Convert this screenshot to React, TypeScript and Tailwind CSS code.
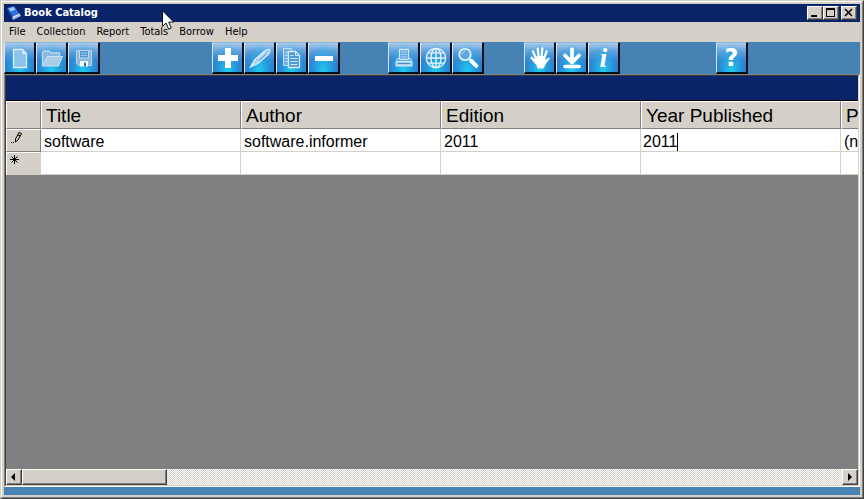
import type { ReactNode } from "react";
import clsx from "clsx";

type BookType = {
    id: string;
    title: string;
    author: string;
    edition: string;
    year: string;
    rest: string;
};

type ToolType = {
    label: string;
    icon: ReactNode;
};

const books: BookType[] = [
    {
        id: "1",
        title: "software",
        author: "software.informer",
        edition: "2011",
        year: "2011",
        rest: "(n",
    },
];

const menus = ["File", "Collection", "Report", "Totals", "Borrow", "Help"];

const columns = ["Title", "Author", "Edition", "Year Published", "P"];

const raised =
    "border border-t-white border-l-white border-r-[#404040] border-b-[#404040] bg-[#d4d0c8] shadow-[inset_-1px_-1px_0_#808080]";

const Icon = ({ children }: { children: ReactNode }) => (
    <svg width="24" height="24" viewBox="0 0 24 24" fill="none" stroke="none" aria-hidden="true">
        {children}
    </svg>
);

const fileTools: ToolType[] = [
    {
        label: "New",
        icon: (
            <Icon>
                <path d="M5.500 3.500h9l4 4v14h-13z" fill="#8cc4ee" stroke="#dcebf6" strokeWidth="1.300" />
                <path d="M14.500 3.500v4h4" fill="#c5e2f7" stroke="#dcebf6" />
            </Icon>
        ),
    },
    {
        label: "Open",
        icon: (
            <Icon>
                <path d="M2.500 20V6.500l1.500-1.500h5l2 2h8.500v3" fill="#86b9e2" stroke="#bcd7ec" strokeWidth="1.300" />
                <path d="m2.500 20 4.500-9.500h15.500l-4 9.500z" fill="#a9cdea" stroke="#cbe0f0" />
            </Icon>
        ),
    },
    {
        label: "Save",
        icon: (
            <Icon>
                <path d="M4.500 4.500h15v15h-13l-2-2z" fill="#8db9dd" stroke="#bcd3e6" />
                <path d="M7.500 4.500h9v7.500h-9z" fill="#4f9bd9" stroke="#c3d9eb" />
                <path d="M9 7h6M9 9.500h6" stroke="#a5c8e5" />
                <path d="M8 15h8v5.500H8z" fill="#f7fbfe" />
                <path d="M12 16.500h2v4h-2z" fill="#1c78b8" />
            </Icon>
        ),
    },
];

const recordTools: ToolType[] = [
    {
        label: "Add",
        icon: (
            <Icon>
                <path d="M9 2h6v7h7v6h-7v7H9v-7H2V9h7z" fill="#fff" />
            </Icon>
        ),
    },
    {
        label: "Edit",
        icon: (
            <Icon>
                <path d="M2.500 21 6.500 14 16 5.500c2.400-2 5-2.500 5.700-1.700.7.900-.2 3.200-2.200 5.200L10 17.500z" fill="#9cc8ea" stroke="#dcecf8" strokeWidth="1.200" />
                <path d="m2.500 21 5-4.500M7 14l3 3M9.500 12.500 17 6.500" stroke="#e8f3fb" />
                <path d="m12 14 6-5.500" stroke="#5a9dd2" />
            </Icon>
        ),
    },
    {
        label: "Copy",
        icon: (
            <Icon>
                <path d="M3.500 2.500h8v3h-3v14h-5z" fill="#6db0e4" stroke="#c8e1f4" />
                <path d="M5 6.500h3M5 9.500h3M5 12.500h3M5 15.500h3" stroke="#b9d9f1" />
                <path d="M8.500 5.500h7l4 4v12h-11z" fill="#4b9bdb" stroke="#d7e9f7" strokeWidth="1.300" />
                <path d="M15.500 5.500v4h4M10.500 9.500h3M10.500 12.500h7M10.500 15.500h7M10.500 18.500h7" stroke="#d7e9f7" />
            </Icon>
        ),
    },
    {
        label: "Remove",
        icon: (
            <Icon>
                <path d="M3 10h18v5H3z" fill="#fff" />
            </Icon>
        ),
    },
];

const viewTools: ToolType[] = [
    {
        label: "Print",
        icon: (
            <Icon>
                <path d="M7.500 3.500h9v10h-9z" fill="#5fa6de" stroke="#d2e6f5" strokeWidth="1.300" />
                <path d="M9 6h6M9 8.500h6M9 11h6" stroke="#b9d8ef" />
                <path d="M7 12.500H5.500l-1 3h15l-1-3H17" stroke="#cfe4f4" />
                <path d="M4 15.500h16v4.500H4z" fill="#a9d0ec" stroke="#d9eaf7" />
                <path d="M6 17.500h12" stroke="#3f8fce" />
            </Icon>
        ),
    },
    {
        label: "Web",
        icon: (
            <Icon>
                <g stroke="#e9f3fb" strokeWidth="1.300">
                    <circle cx="12" cy="12" r="9.700" />
                    <ellipse cx="12" cy="12" rx="5" ry="9.700" />
                    <path d="M12 2.300v19.400M2.300 12h19.400M4 6.800h16M4 17.200h16" />
                </g>
            </Icon>
        ),
    },
    {
        label: "Search",
        icon: (
            <Icon>
                <circle cx="9" cy="8.500" r="5.700" fill="#5da8e2" stroke="#e3f0fa" strokeWidth="1.800" />
                <path d="M6 8c.3-1.600 1.400-2.500 3-2.700" stroke="#c8e1f4" />
                <path d="m13.500 13 1.800 1.800" stroke="#e3f0fa" strokeWidth="2" />
                <path d="m15.300 14.800 5 5" stroke="#fff" strokeWidth="4" strokeLinecap="round" />
            </Icon>
        ),
    },
];

const actionTools: ToolType[] = [
    {
        label: "Borrow",
        icon: (
            <Icon>
                <path d="M8 12.500 5 5.500M10.700 11 9.700 2.700M13.700 11l.6-8.500M16.300 12l2.300-6.700M8 17 3.500 11.800" stroke="#fff" strokeWidth="2.300" strokeLinecap="round" />
                <path d="M6.800 11.500 9.500 10h7.800l.2 4 3-2.200c1-.5 1.700.2 1.100 1L17.500 18.500 15.500 22.500H9.500L8.300 19 5.500 15.500z" fill="#fff" />
            </Icon>
        ),
    },
    {
        label: "Download",
        icon: (
            <Icon>
                <path d="M12 3.500V16M5 9.500l7 7 7-7" stroke="#fff" strokeWidth="3.800" strokeLinecap="round" strokeLinejoin="round" />
                <path d="M5 20.500h14" stroke="#fff" strokeWidth="3.500" strokeLinecap="round" />
            </Icon>
        ),
    },
    {
        label: "Info",
        icon: (
            <span className="font-['Liberation_Serif',serif] text-[28px] leading-6 font-bold text-white italic">i</span>
        ),
    },
];

const helpTools: ToolType[] = [
    {
        label: "Help",
        icon: (
            <span className="font-['DejaVu_Sans',sans-serif] text-2xl leading-6 font-bold text-white">?</span>
        ),
    },
];

const ToolGroup = ({ tools }: { tools: ToolType[] }) => (
    <div className="flex shrink-0">
        {tools.map((tool) => (
            <button
                key={tool.label}
                aria-label={tool.label}
                className="flex size-8 items-center justify-center border-t border-r-2 border-b-2 border-l border-t-[#8fb6d8] border-r-[#06101c] border-b-[#06101c] border-l-[#d5e6f4] bg-[radial-gradient(ellipse_at_50%_105%,#1fd0f0_0%,#22b4ea90_38%,transparent_70%),linear-gradient(#a8cbea_0%,#5c9fdb_30%,#3484d2_60%,#267fcd_100%)]"
            >
                {tool.icon}
            </button>
        ))}
    </div>
);

const BookIcon = () => (
    <svg width="14" height="16" viewBox="0 0 14 16" aria-hidden="true">
        <path d="M0 3 7 1l5.500 7.500L5.500 11.500z" fill="#2f6fe0" />
        <path d="M1.500 3.500 6.500 2l2 2.700L3.500 6.500z" fill="#a3c6fb" />
        <path d="M0 3 5.500 11.500V15L1 7z" fill="#123c9c" />
        <path d="m5.500 11.500 7-3 1.300 2.500-8 4z" fill="#dfe7f2" />
        <path d="m5.800 13.300 7.500-3.500" stroke="#8e9db8" strokeWidth=".7" />
        <path d="m5.500 15.200 8.300-4" stroke="#2458c4" />
    </svg>
);

const TitleBar = () => (
    <header className="flex h-[18px] shrink-0 items-center bg-[#0a246a] pr-[3px] pl-[3px]">
        <BookIcon />
        <h1 className="ml-[3px] flex-1 font-['DejaVu_Sans_Condensed','DejaVu_Sans',sans-serif] text-[11px] leading-4 font-bold text-white">
            Book Catalog
        </h1>
        <button aria-label="Minimize" className={clsx(raised, "h-[14px] w-4")}>
            <svg width="14" height="12" viewBox="0 0 14 12"><path d="M3 8h6v2H3z" /></svg>
        </button>
        <button aria-label="Maximize" className={clsx(raised, "h-[14px] w-4")}>
            <svg width="14" height="12" viewBox="0 0 14 12"><path fillRule="evenodd" d="M2 1h9v9H2zM3 3v6h7V3z" /></svg>
        </button>
        <button aria-label="Close" className={clsx(raised, "ml-0.5 h-[14px] w-4")}>
            <svg width="14" height="12" viewBox="0 0 14 12"><path d="m3 2 7 7m0-7L3 9" stroke="#000" strokeWidth="1.500" /></svg>
        </button>
    </header>
);

const MenuBar = () => (
    <nav className="flex h-5 shrink-0 items-center gap-[11px] pl-[5px] font-['DejaVu_Sans_Condensed','DejaVu_Sans',sans-serif] text-[11px] leading-4 text-black">
        {menus.map((menu) => (
            <button key={menu}>{menu}</button>
        ))}
    </nav>
);

const ToolBar = () => (
    <div className="flex h-8 shrink-0 overflow-hidden bg-[#4682b4]">
        <ToolGroup tools={fileTools} />
        <div className="w-28 shrink-0" />
        <ToolGroup tools={recordTools} />
        <div className="w-12 shrink-0" />
        <ToolGroup tools={viewTools} />
        <div className="w-10 shrink-0" />
        <ToolGroup tools={actionTools} />
        <div className="w-24 shrink-0" />
        <ToolGroup tools={helpTools} />
    </div>
);

const cell = "h-[23px] border-r border-b border-[#d4d0c8] bg-white px-[3px] pt-1 pb-0 leading-[18px]";
const rowHead = "border-t border-l border-white bg-[#d4d0c8] p-0 pl-[3px] align-top";

const BookTable = () => (
    <table className="w-[1035px] table-fixed border-separate border-spacing-0 text-base text-black">
        <colgroup>
            <col className="w-[35px]" />
            {columns.map((column) => (
                <col key={column} className="w-[200px]" />
            ))}
        </colgroup>
        <thead>
            <tr className="text-left text-[19px]">
                <th className="h-7 border border-t-white border-r-[#808080] border-b-[#808080] border-l-white bg-[#d4d0c8] p-0"></th>
                {columns.map((column) => (
                    <th
                        key={column}
                        className="h-7 border border-t-white border-r-[#808080] border-b-[#808080] border-l-white bg-[#d4d0c8] p-0 pt-0.5 pl-1 leading-6 font-normal"
                    >
                        {column}
                    </th>
                ))}
            </tr>
        </thead>
        <tbody>
            {books.map((book) => (
                <tr key={book.id}>
                    <th className={clsx(rowHead, "border-r border-b border-r-[#808080] border-b-[#808080]")}>
                        <svg width="14" height="16" viewBox="0 0 14 16" fill="none" stroke="#000" aria-hidden="true">
                            <path d="M5.500 12V9L9 2.500l2.500 1L8 10z" />
                            <path d="m8 5 2.500 1M1 12.500h1m1 0h1" />
                        </svg>
                    </th>
                    <td className={cell}>{book.title}</td>
                    <td className={cell}>{book.author}</td>
                    <td className={cell}>{book.edition}</td>
                    <td className={clsx(cell, "pl-0.5")}>
                        <div className="flex items-center">
                            <input
                                aria-label="Year Published"
                                defaultValue={book.year}
                                className="field-sizing-content h-[18px] bg-transparent p-0 outline-none"
                            />
                            <span className="h-[18px] w-px bg-black" />
                        </div>
                    </td>
                    <td className={cell}>{book.rest}</td>
                </tr>
            ))}
            <tr>
                <th className={clsx(rowHead, "border-r border-b border-r-[#d4d0c8] border-b-[#d4d0c8]")}>
                    <svg width="14" height="16" viewBox="0 0 14 16" stroke="#000" aria-hidden="true">
                        <path d="M4.500 2v9M0 6.500h9M1.500 3.500l6 6m0-6-6 6" />
                    </svg>
                </th>
                {columns.map((column) => (
                    <td key={column} className={cell}></td>
                ))}
            </tr>
        </tbody>
    </table>
);

const ScrollBar = () => (
    <div className="flex h-4 shrink-0 bg-[repeating-conic-gradient(#fff_0_25%,#d4d0c8_0_50%)] bg-size-[2px_2px]">
        <button aria-label="Scroll left" className={clsx(raised, "w-4")}>
            <svg width="14" height="14" viewBox="0 0 14 14"><path d="M8 3v8L4 7z" /></svg>
        </button>
        <div className={clsx(raised, "w-[17%]")} />
        <div className="flex-1" />
        <button aria-label="Scroll right" className={clsx(raised, "w-4")}>
            <svg width="14" height="14" viewBox="0 0 14 14"><path d="M5 3v8l4-4z" /></svg>
        </button>
    </div>
);

const Cursor = () => (
    <svg className="absolute top-[9px] left-[161px]" width="13" height="21" viewBox="0 0 13 21" aria-hidden="true">
        <path d="M.5.8v15.700l3.600-3.500 2.600 6.200 2.600-1.100-2.600-6h5z" fill="#fff" stroke="#000" strokeWidth=".9" />
    </svg>
);

export default function App() {
    return (
        <div className="relative flex h-screen flex-col border border-t-[#d4d0c8] border-r-[#404040] border-b-[#404040] border-l-[#d4d0c8] bg-[#d4d0c8] font-['Liberation_Sans',Arial,sans-serif]">
            <div className="flex min-h-0 flex-1 flex-col border border-t-white border-r-[#808080] border-b-[#808080] border-l-white p-0.5">
                <TitleBar />
                <MenuBar />
                <ToolBar />
                <main className="flex min-h-0 flex-1 flex-col border border-t-[#808080] border-r-white border-b-white border-l-[#808080]">
                    <div className="flex min-h-0 flex-1 flex-col border border-t-[#404040] border-r-[#d4d0c8] border-b-[#d4d0c8] border-l-[#404040] bg-[#808080]">
                        <div className="h-[25px] shrink-0 border-b border-black bg-[#0a246a]" />
                        <div className="min-h-0 flex-1 overflow-hidden">
                            <BookTable />
                        </div>
                        <ScrollBar />
                    </div>
                </main>
                <footer className="h-2 shrink-0 bg-[#4682b4]" />
            </div>
            <Cursor />
        </div>
    );
}
